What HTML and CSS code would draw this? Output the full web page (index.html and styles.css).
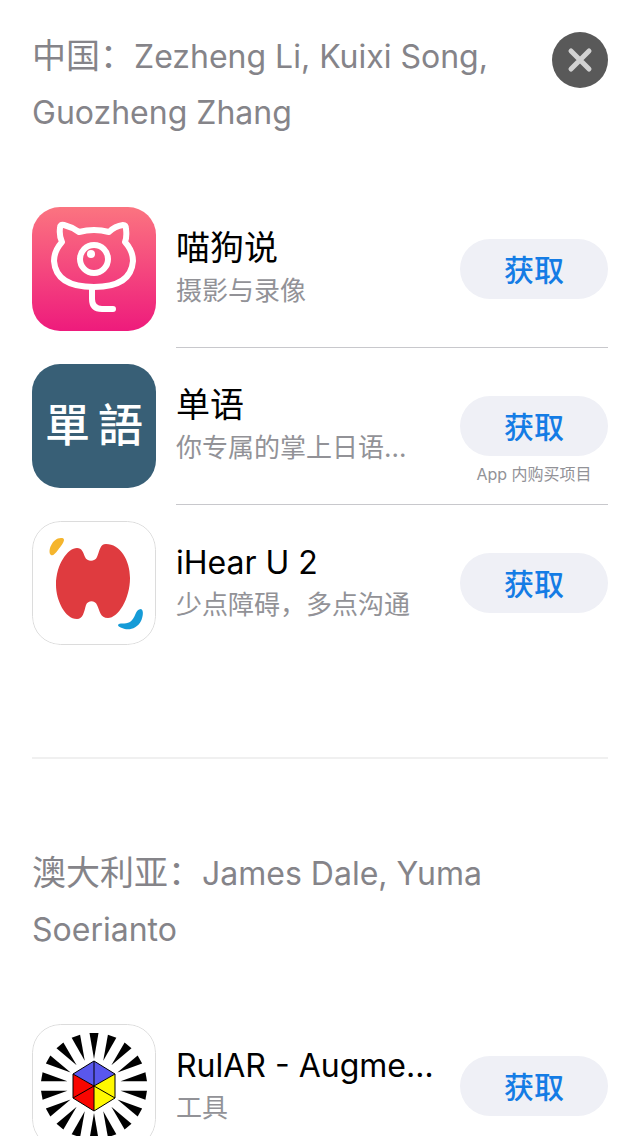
FILE: index.html
```
<!DOCTYPE html>
<html lang="zh-CN">

<head>
    <meta charset="utf-8">
    <meta name="viewport" content="width=device-width, initial-scale=1.0">
    <title>App Store</title>

    <link rel="stylesheet" href="styles.css">
</head>

<body>

    <button class="luk" aria-label="关闭">
        <svg viewBox="0 0 56 56">
            <path d="M19 19 L37 37 M37 19 L19 37" />
        </svg>
    </button>

    <main>
        <section class="land">
            <h2>中国：<span class="latin">Zezheng Li, Kuixi Song, Guozheng Zhang</span></h2>

            <ul class="apps">
                <li class="app">
                    <svg class="ikon" viewBox="0 0 124 124">
                        <defs>
                            <linearGradient id="pink" x1="0" y1="0" x2="0" y2="1">
                                <stop offset="0" stop-color="#fb7480" />
                                <stop offset="1" stop-color="#ee1b7c" />
                            </linearGradient>
                        </defs>
                        <rect width="124" height="124" fill="url(#pink)" />
                        <g fill="none" stroke="#fff" stroke-width="6" stroke-linecap="round" stroke-linejoin="round">
                            <path d="M47 25 Q62 21 77 25 Q83 19 91 18 Q94 18 94 22 Q95 30 93 35 Q101 44 101 54 Q99 80 62 80 Q24 80 22 54 Q22 44 30 35 Q27 29 28 21 Q28 17 32 18 Q40 20 47 25 Z" />
                            <circle cx="62" cy="52" r="14" />
                            <path d="M60 81 V92 Q60 102 70 102 H81" />
                        </g>
                        <circle cx="59" cy="47" r="4" fill="#fff" />
                    </svg>
                    <div class="info">
                        <div class="tekst">
                            <h3>喵狗说</h3>
                            <p>摄影与录像</p>
                        </div>
                        <div class="hent">
                            <button>获取</button>
                        </div>
                    </div>
                </li>

                <li class="app">
                    <svg class="ikon" viewBox="0 0 124 124">
                        <rect width="124" height="124" fill="#385f76" />
                        <text class="tegn" x="13" y="78">單</text>
                        <text class="tegn" x="66" y="78">語</text>
                    </svg>
                    <div class="info">
                        <div class="tekst">
                            <h3>单语</h3>
                            <p>你专属的掌上日语…</p>
                        </div>
                        <div class="hent">
                            <button>获取</button>
                            <small>App 内购买项目</small>
                        </div>
                    </div>
                </li>

                <li class="app">
                    <svg class="ikon" viewBox="0 0 124 124">
                        <path fill="#df3b3f" d="M45 27 C50 27 51 31 53 36 C55 41 63 41 65 36 C68 29 68 23 74 23 C88 23 98 39 98 57 C98 78 86 97 76 97 C68 97 68 90 65 84 C63 79 56 79 54 84 C52 91 51 98 45 98 C33 98 24 79 24 64 C24 43 36 27 45 27 Z" />
                        <path fill="#f5b52d" d="M19 34 C15 31 20 17 29 17 C36 17 29 25 26 29 C23 33 21 35 19 34 Z" />
                        <path fill="#159bd7" d="M86 104 C87 101 93 104 98 101 C104 97 103 88 109 88 C112 89 111 96 109 100 C105 108 96 110 90 107 C87 106 86 105 86 104 Z" />
                        <rect class="kant" x="0.5" y="0.5" width="123" height="123" rx="28" />
                    </svg>
                    <div class="info">
                        <div class="tekst">
                            <h3><span class="latin">iHear U 2</span></h3>
                            <p>少点障碍，多点沟通</p>
                        </div>
                        <div class="hent">
                            <button>获取</button>
                        </div>
                    </div>
                </li>
            </ul>
        </section>

        <section class="land">
            <h2>澳大利亚：<span class="latin">James Dale, Yuma Soerianto</span></h2>

            <ul class="apps">
                <li class="app">
                    <svg class="ikon" viewBox="0 0 124 124">
                        <defs>
                            <path id="straale" d="M57.5 9 H66.5 L62 35 Z" />
                        </defs>
                        <g id="straaler"></g>
                        <path fill="#5957ed" d="M62 62 L41 50 L62 37 L83 50 Z" />
                        <path fill="#fff800" d="M62 62 L83 50 V74 L62 87 Z" />
                        <path fill="#f90500" d="M62 62 L41 50 V74 L62 87 Z" />
                        <path fill="none" stroke="#000" d="M62 37 L83 50 V74 L62 87 L41 74 V50 Z M62 37 V87 M41 50 L83 74 M83 50 L41 74" />
                        <rect class="kant" x="0.5" y="0.5" width="123" height="123" rx="28" />
                    </svg>
                    <div class="info">
                        <div class="tekst">
                            <h3><span class="latin">RulAR - Augme…</span></h3>
                            <p>工具</p>
                        </div>
                        <div class="hent">
                            <button>获取</button>
                        </div>
                    </div>
                </li>
            </ul>
        </section>
    </main>

    <script>
        const antal = 18;
        const straaler = document.querySelector("#straaler");

        for (let i = 0; i < antal; i++) {
            const use = document.createElementNS("http://www.w3.org/2000/svg", "use");
            use.setAttribute("href", "#straale");
            use.setAttribute("transform", `rotate(${i * 360 / antal} 62 62)`);
            straaler.appendChild(use);
        }
    </script>

</body>

</html>
```
FILE: styles.css
```
* {
    box-sizing: border-box;
}

body {
    margin: 0;
    background-color: white;
    color: black;
    font-family: Inter, "Noto Sans CJK SC", sans-serif;
}

main {
    padding: 28px 32px;
}

h2,
h3,
p,
ul {
    margin: 0;
    padding: 0;
    font-weight: 400;
}

button {
    border: none;
    padding: 0;
    font-family: inherit;
    cursor: pointer;
}

/*Luk knap*/

.luk {
    position: fixed;
    top: 32px;
    right: 32px;
    width: 56px;
    height: 56px;
    border-radius: 50%;
    background-color: #595959;
}

.luk svg {
    display: block;
    fill: none;
    stroke: #d2d2d2;
    stroke-width: 5;
    stroke-linecap: round;
}

/*Lande*/

.land + .land {
    margin-top: 95px;
    border-top: 2px solid #f0f0f0;
    padding-top: 86px;
}

h2 {
    margin-bottom: 51px;
    padding-right: 88px;
    font-size: 34px;
    line-height: 56px;
    color: #858489;
}

.latin {
    font-size: 32px;
    line-height: 32px;
}

/*Apps*/

.apps {
    list-style: none;
}

.app {
    display: flex;
    gap: 20px;
    padding-top: 16px;
}

.ikon {
    flex: none;
    width: 124px;
    height: 124px;
    border-radius: 28px;
}

.kant {
    fill: none;
    stroke: #dcdcdc;
}

.tegn {
    font-family: "Noto Sans CJK TC", sans-serif;
    font-size: 45px;
    font-weight: 500;
    fill: white;
}

.info {
    flex: 1;
    min-width: 0;
    min-height: 141px;
    display: flex;
    gap: 20px;
    border-bottom: 1px solid #c8c8cc;
}

.app:last-child .info {
    border-bottom: none;
}

.tekst {
    flex: 1;
    min-width: 0;
    padding-top: 19px;
    white-space: nowrap;
}

.tekst h3 {
    font-size: 34px;
    line-height: 44px;
}

.tekst p {
    font-size: 26px;
    line-height: 42px;
    color: #929297;
}

.hent {
    flex: none;
    width: 148px;
    padding-top: 32px;
    text-align: center;
}

.hent button {
    display: block;
    width: 100%;
    height: 60px;
    padding-bottom: 3px;
    border-radius: 30px;
    background-color: #eff0f6;
    color: #147ce5;
    font-size: 30px;
    font-weight: 500;
}

.hent small {
    display: block;
    margin-top: 8px;
    font-size: 16px;
    line-height: 20px;
    color: #929297;
}
```
